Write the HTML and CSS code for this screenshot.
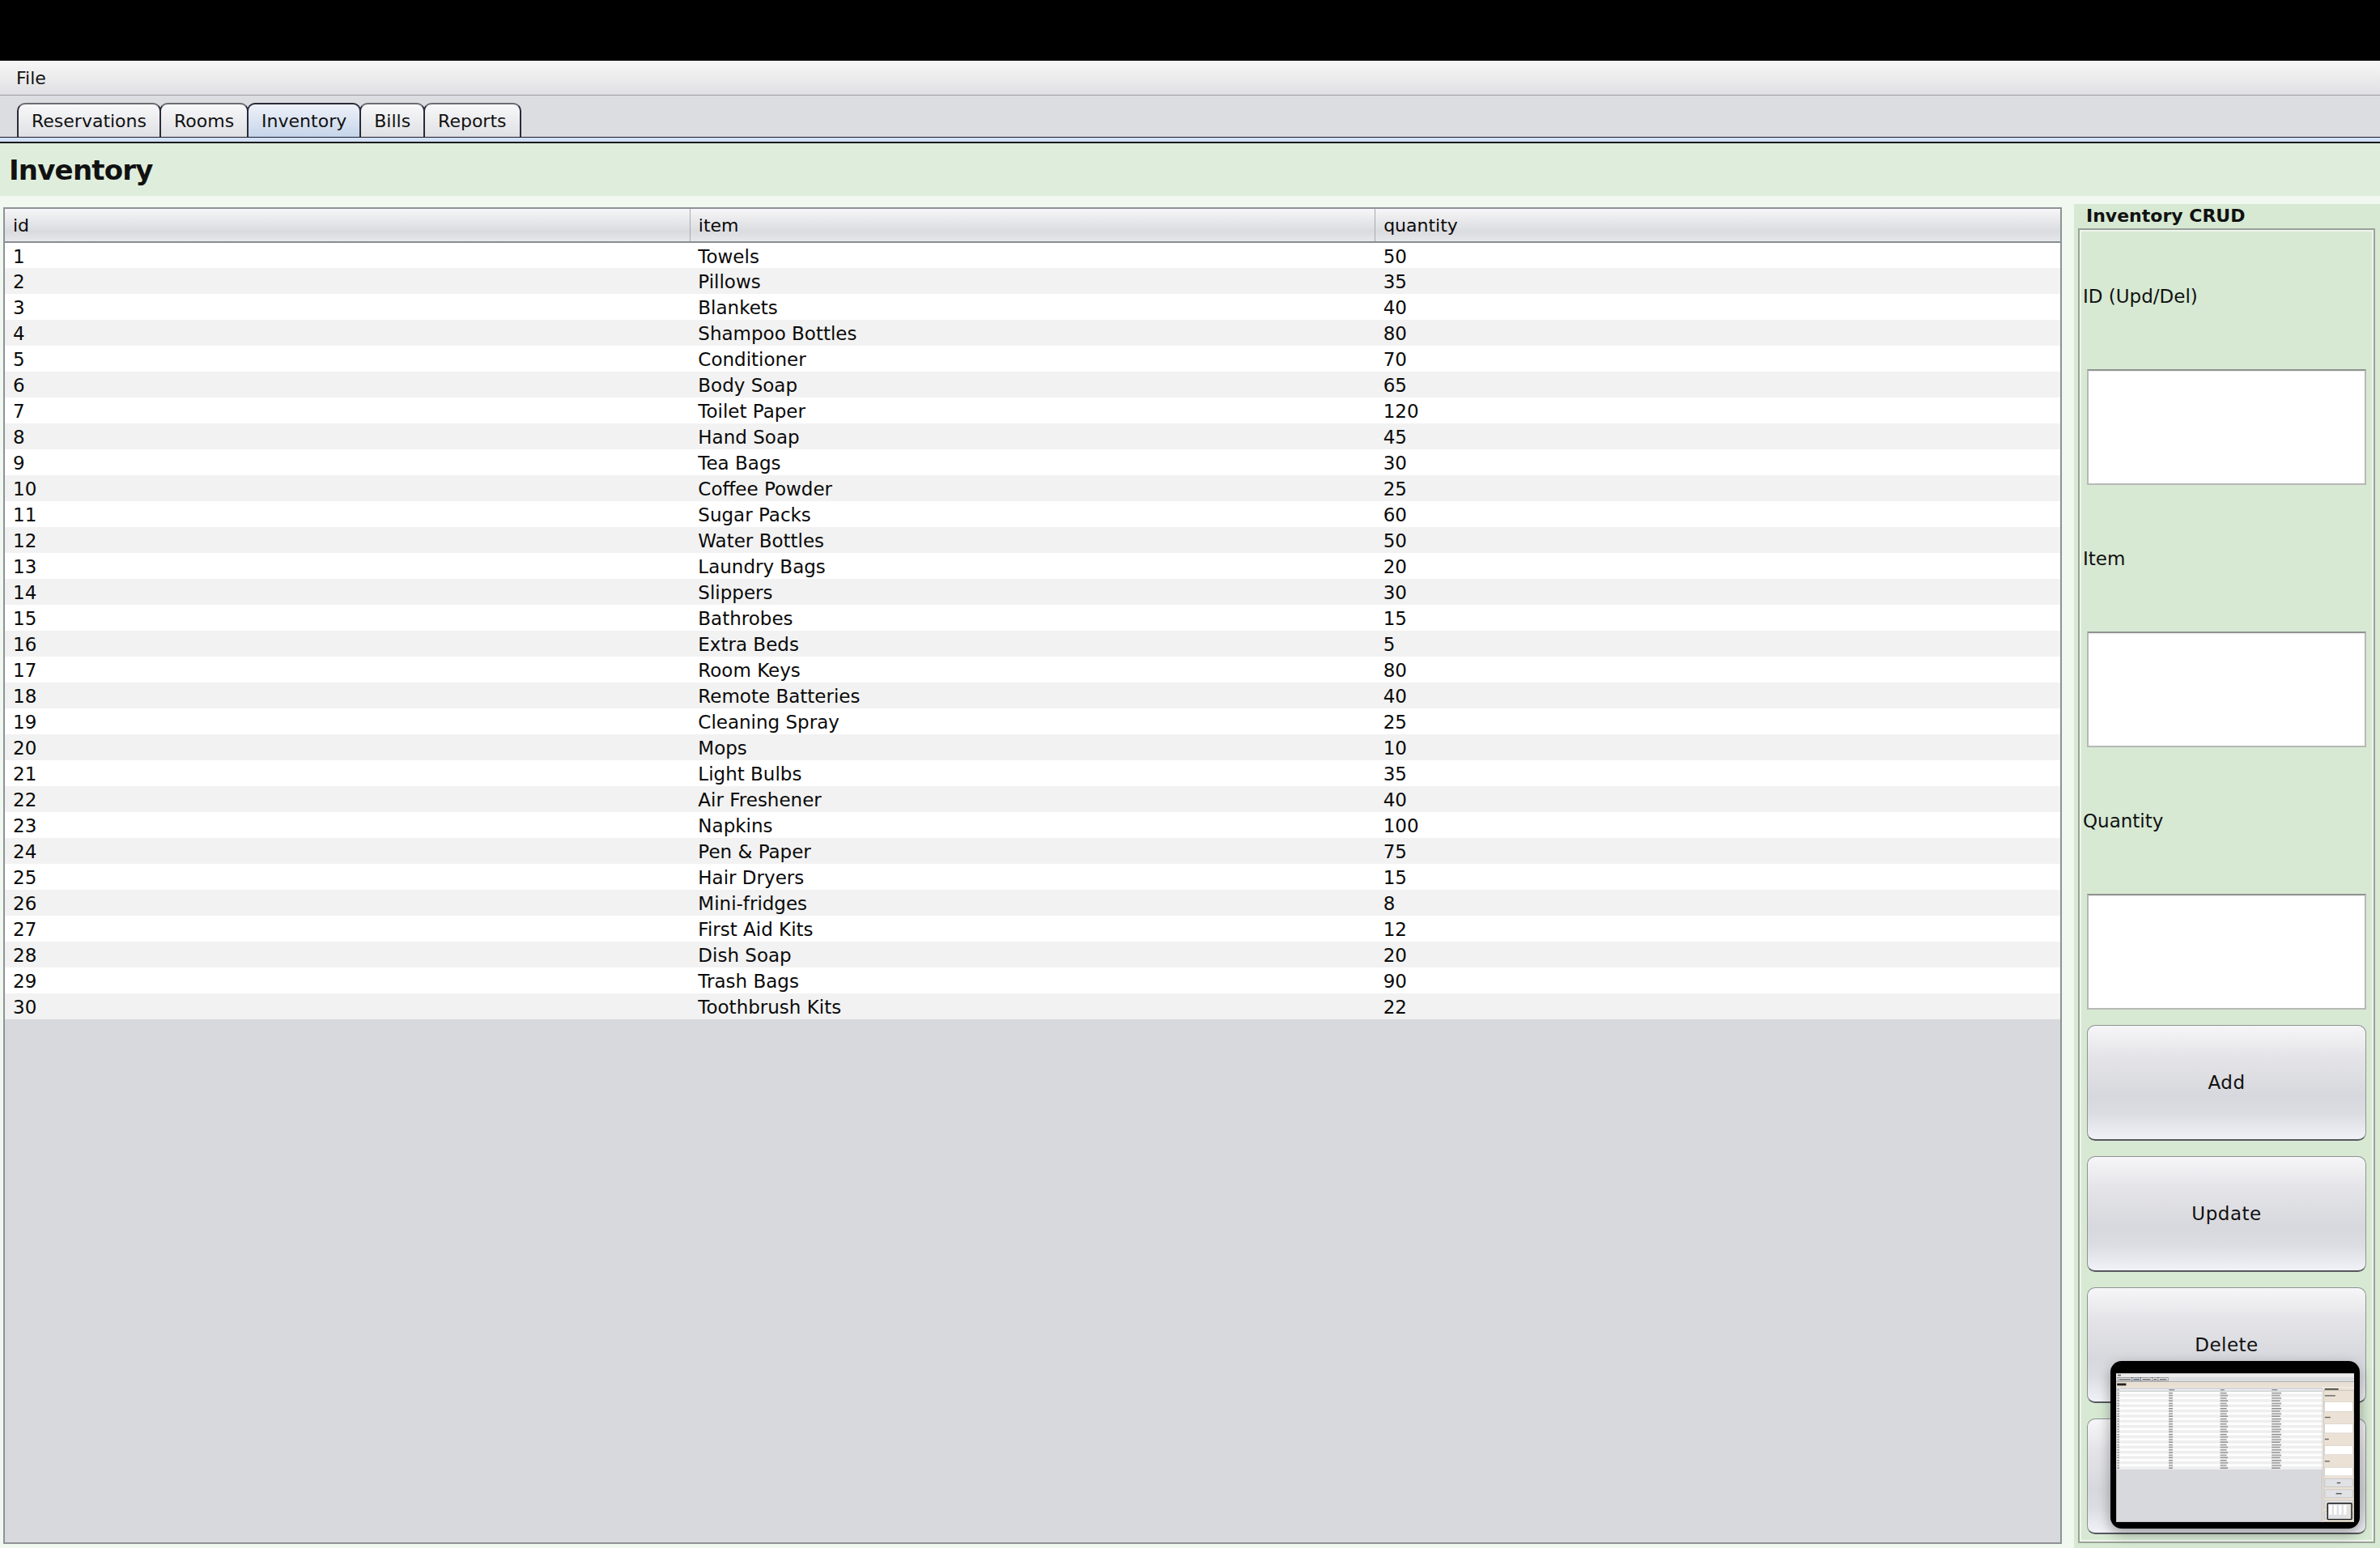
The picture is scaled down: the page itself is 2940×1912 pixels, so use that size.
FILE: index.html
```html
<!DOCTYPE html>
<html lang="en">
<head>
<meta charset="utf-8">
<title>Hotel Management - Inventory</title>
<link rel="stylesheet" href="styles.css">
</head>
<body>
<div class="app">
  <div class="titlebar"></div>
  <div class="menubar"><span class="menu-item">File</span></div>
  <div class="tabstrip">
    <div class="tab">Reservations</div>
    <div class="tab">Rooms</div>
    <div class="tab selected">Inventory</div>
    <div class="tab">Bills</div>
    <div class="tab">Reports</div>
  </div>
  <div class="tabband"></div>
  <div class="page">
    <div class="page-header"><h1>Inventory</h1></div>
    <div class="page-body">
      <div class="table-wrap">
        <table class="grid">
          <thead>
            <tr><th>id</th><th>item</th><th>quantity</th></tr>
          </thead>
          <tbody>
            <tr><td>1</td><td>Towels</td><td>50</td></tr>
            <tr><td>2</td><td>Pillows</td><td>35</td></tr>
            <tr><td>3</td><td>Blankets</td><td>40</td></tr>
            <tr><td>4</td><td>Shampoo Bottles</td><td>80</td></tr>
            <tr><td>5</td><td>Conditioner</td><td>70</td></tr>
            <tr><td>6</td><td>Body Soap</td><td>65</td></tr>
            <tr><td>7</td><td>Toilet Paper</td><td>120</td></tr>
            <tr><td>8</td><td>Hand Soap</td><td>45</td></tr>
            <tr><td>9</td><td>Tea Bags</td><td>30</td></tr>
            <tr><td>10</td><td>Coffee Powder</td><td>25</td></tr>
            <tr><td>11</td><td>Sugar Packs</td><td>60</td></tr>
            <tr><td>12</td><td>Water Bottles</td><td>50</td></tr>
            <tr><td>13</td><td>Laundry Bags</td><td>20</td></tr>
            <tr><td>14</td><td>Slippers</td><td>30</td></tr>
            <tr><td>15</td><td>Bathrobes</td><td>15</td></tr>
            <tr><td>16</td><td>Extra Beds</td><td>5</td></tr>
            <tr><td>17</td><td>Room Keys</td><td>80</td></tr>
            <tr><td>18</td><td>Remote Batteries</td><td>40</td></tr>
            <tr><td>19</td><td>Cleaning Spray</td><td>25</td></tr>
            <tr><td>20</td><td>Mops</td><td>10</td></tr>
            <tr><td>21</td><td>Light Bulbs</td><td>35</td></tr>
            <tr><td>22</td><td>Air Freshener</td><td>40</td></tr>
            <tr><td>23</td><td>Napkins</td><td>100</td></tr>
            <tr><td>24</td><td>Pen &amp; Paper</td><td>75</td></tr>
            <tr><td>25</td><td>Hair Dryers</td><td>15</td></tr>
            <tr><td>26</td><td>Mini-fridges</td><td>8</td></tr>
            <tr><td>27</td><td>First Aid Kits</td><td>12</td></tr>
            <tr><td>28</td><td>Dish Soap</td><td>20</td></tr>
            <tr><td>29</td><td>Trash Bags</td><td>90</td></tr>
            <tr><td>30</td><td>Toothbrush Kits</td><td>22</td></tr>
          </tbody>
        </table>
      </div>
      <div class="crud">
        <div class="crud-title">Inventory CRUD</div>
        <div class="crud-box">
          <div class="crud-label">ID (Upd/Del)</div>
          <div class="crud-field"></div>
          <div class="crud-label">Item</div>
          <div class="crud-field"></div>
          <div class="crud-label">Quantity</div>
          <div class="crud-field"></div>
          <div class="crud-btn">Add</div>
          <div class="crud-btn">Update</div>
          <div class="crud-btn">Delete</div>
          <div class="crud-btn">Refresh</div>
        </div>
      </div>
    </div>
  </div>

  <div class="thumb">
    <svg class="thumb-img" width="294" height="191" viewBox="0 0 2940 1912" preserveAspectRatio="none">
      <defs>
        <pattern id="rows" x="0" y="300" width="2940" height="64" patternUnits="userSpaceOnUse">
          <rect width="2940" height="32" fill="#ffffff"/>
          <rect y="32" width="2940" height="32" fill="#efefef"/>
          <g fill="#8a8a8a">
            <rect x="14" y="9" width="26" height="14"/>
            <rect x="650" y="9" width="50" height="14"/>
            <rect x="1286" y="9" width="80" height="14"/>
            <rect x="1921" y="9" width="120" height="14"/>
            <rect x="14" y="41" width="26" height="14"/>
            <rect x="650" y="41" width="50" height="14"/>
            <rect x="1286" y="41" width="95" height="14"/>
            <rect x="1921" y="41" width="105" height="14"/>
          </g>
        </pattern>
      </defs>
      <rect x="0" y="0" width="2940" height="1912" fill="#f4efe7"/>
      <rect x="0" y="0" width="2940" height="75" fill="#000"/>
      <rect x="0" y="75" width="2940" height="43" fill="#ececee"/>
      <rect x="20" y="88" width="40" height="16" fill="#666"/>
      <rect x="0" y="118" width="2940" height="52" fill="#dcdde0"/>
      <g stroke="#333" stroke-width="4" fill="#eeeef0">
        <rect x="21" y="127" width="176" height="42"/>
        <rect x="197" y="127" width="110" height="42" fill="#cbd8eb"/>
        <rect x="307" y="127" width="136" height="42"/>
        <rect x="443" y="127" width="77" height="42"/>
        <rect x="520" y="127" width="121" height="42"/>
      </g>
      <g fill="#666">
        <rect x="36" y="141" width="144" height="14"/>
        <rect x="214" y="141" width="76" height="14"/>
        <rect x="323" y="141" width="104" height="14"/>
        <rect x="459" y="141" width="45" height="14"/>
        <rect x="536" y="141" width="88" height="14"/>
      </g>
      <rect x="0" y="169" width="2940" height="8" fill="#cfdcef"/>
      <rect x="0" y="175" width="2940" height="3" fill="#222"/>
      <rect x="0" y="178" width="2940" height="64" fill="#e9dfd2"/>
      <rect x="12" y="196" width="112" height="28" fill="#222"/>
      <rect x="4" y="256" width="2543" height="1651" fill="#d8d9dd" stroke="#8e9297" stroke-width="4"/>
      <rect x="6" y="258" width="2539" height="40" fill="#e4e5e8"/>
      <g fill="#888">
        <rect x="16" y="270" width="20" height="14"/>
        <rect x="652" y="270" width="70" height="14"/>
        <rect x="1288" y="270" width="50" height="14"/>
        <rect x="1923" y="270" width="70" height="14"/>
      </g>
      <rect x="6" y="298" width="2539" height="3" fill="#8a8e94"/>
      <rect x="6" y="300" width="2539" height="960" fill="url(#rows)"/>
      <rect x="2562" y="252" width="378" height="1660" fill="#ebe2d5"/>
      <rect x="2577" y="260" width="170" height="16" fill="#333"/>
      <rect x="2567" y="282" width="367" height="1624" fill="none" stroke="#9a968f" stroke-width="4"/>
      <g fill="#666">
        <rect x="2578" y="342" width="130" height="14"/>
        <rect x="2578" y="610" width="70" height="14"/>
        <rect x="2578" y="880" width="50" height="14"/>
        <rect x="2578" y="1153" width="60" height="14"/>
      </g>
      <g fill="#fff" stroke="#b3b3b3" stroke-width="3">
        <rect x="2578" y="427" width="345" height="116"/>
        <rect x="2578" y="700" width="345" height="110"/>
        <rect x="2578" y="970" width="345" height="107"/>
        <rect x="2578" y="1237" width="345" height="103"/>
      </g>
      <g fill="#e1e2e6" stroke="#8a8c90" stroke-width="3">
        <rect x="2578" y="1377" width="345" height="100" rx="10"/>
        <rect x="2578" y="1510" width="345" height="100" rx="10"/>
        <rect x="2578" y="1643" width="345" height="100" rx="10"/>
        <rect x="2578" y="1776" width="345" height="100" rx="10"/>
      </g>
      <g fill="#555">
        <rect x="2728" y="1420" width="44" height="14"/>
        <rect x="2716" y="1553" width="70" height="14"/>
      </g>
      <rect x="2612" y="1679" width="298" height="199" rx="8" fill="#dfe0e3" stroke="#111" stroke-width="14"/>
      <g fill="#fff">
        <rect x="2630" y="1700" width="36" height="120"/>
        <rect x="2690" y="1700" width="36" height="120"/>
        <rect x="2750" y="1700" width="36" height="120"/>
        <rect x="2810" y="1700" width="36" height="120"/>
      </g>
      <rect x="2860" y="1700" width="30" height="160" fill="#ebe2d5"/>
    </svg>
  </div>
</div>
</body>
</html>
```

FILE: styles.css
```css
html, body {
  margin: 0;
  padding: 0;
}

body {
  width: 2940px;
  height: 1912px;
  overflow: hidden;
  background: #f0f8ef;
  font-family: "DejaVu Sans", "Noto Sans", sans-serif;
  color: #111;
}

.app {
  position: relative;
  display: flex;
  flex-direction: column;
  width: 2940px;
  height: 1912px;
}

.titlebar {
  flex: none;
  height: 75px;
  background: #000;
}

.menubar {
  flex: none;
  height: 42px;
  border-bottom: 1px solid #9d9ea2;
  background: linear-gradient(#f7f7f7, #e0e0e2);
  display: flex;
  align-items: center;
  padding-left: 20px;
  font-size: 22px;
}

.tabstrip {
  flex: none;
  box-sizing: border-box;
  height: 52px;
  padding: 9px 0 0 21px;
  background: #dcdde0;
  border-bottom: 1px solid #1e1e2c;
  display: flex;
  align-items: flex-end;
}

.tab {
  box-sizing: border-box;
  height: 42px;
  padding: 0 16px;
  border: 2px solid #2a2a38;
  border-top-color: #6a6c74;
  border-bottom: none;
  border-radius: 10px 10px 0 0;
  background: linear-gradient(#f8f8fa, #dfe0e4);
  font-size: 22px;
  display: flex;
  align-items: center;
  margin-right: -2px;
}

.tab.selected {
  background: linear-gradient(#eef2f9, #c6d5ea);
  border-top-color: #2a2a38;
}

.tabband {
  flex: none;
  height: 5px;
  background: #d2e0f4;
  border-bottom: 2px solid #1b1b1f;
}

.page {
  flex: 1;
  display: flex;
  flex-direction: column;
  min-height: 0;
}

.page-header {
  flex: none;
  height: 65px;
  background: #dfeedc;
  display: flex;
  align-items: center;
  padding-left: 11px;
}

.page-header h1 {
  margin: 0;
  font-size: 34px;
  font-weight: bold;
  letter-spacing: -0.8px;
}

.page-body {
  flex: 1;
  display: flex;
  align-items: flex-start;
  padding-left: 4px;
  background: #f0f8ef;
  min-height: 0;
}

.table-wrap {
  flex: none;
  box-sizing: border-box;
  width: 2543px;
  height: 1651px;
  margin-top: 14px;
  border: 2px solid #8e9298;
  background: #d8d9dd;
  overflow: hidden;
}

.grid {
  width: 100%;
  border-collapse: collapse;
  table-layout: fixed;
  font-size: 23px;
  color: #0a0a0a;
}

.grid th {
  height: 40px;
  padding: 0 0 0 10px;
  text-align: left;
  font-weight: normal;
  font-size: 22px;
  background: linear-gradient(#f6f6f8, #e4e5e8 45%, #dadbdf 70%, #e6e7ea);
  border-bottom: 2px solid #898d93;
}

.grid th + th {
  border-left: 1px solid #a7aab0;
}

.grid td {
  box-sizing: border-box;
  height: 32px;
  padding: 2px 0 0 10px;
  line-height: 28px;
  white-space: nowrap;
  background: #ffffff;
}

.grid tbody tr:nth-child(even) td {
  background: #f2f2f2;
}

.crud {
  flex: 1;
  align-self: stretch;
  margin: 10px 0 0 15px;
  padding: 0 6px 0 5px;
  background: #d7e9d3;
  display: flex;
  flex-direction: column;
}

.crud-title {
  height: 30px;
  line-height: 30px;
  padding-left: 10px;
  font-size: 22px;
  font-weight: bold;
}

.crud-box {
  border: 2px solid #9ba199;
  box-shadow: inset 0 0 0 2px #eef5ec;
  padding: 10px 2px 9px 4px;
  display: grid;
  grid-template-rows: repeat(10, 143px);
  row-gap: 19px;
}

.crud-label {
  display: flex;
  align-items: center;
  font-size: 23px;
}

.crud-field {
  margin: 0 7px 0 5px;
  background: #fff;
  border: 2px solid #b7b9b7;
  border-top-color: #8f918f;
  box-shadow: inset 0 1px 2px rgba(0, 0, 0, 0.08);
}

.crud-btn {
  margin: 0 7px 0 5px;
  border: 1px solid #8f9195;
  border-bottom: 2px solid #55585d;
  border-radius: 10px;
  background: linear-gradient(#f6f6f8, #e4e4e8 28%, #d7d8dd 62%, #dcdde2 78%, #f1f2f7);
  display: flex;
  align-items: center;
  justify-content: center;
  font-size: 23px;
  letter-spacing: 0.5px;
}

.thumb {
  position: absolute;
  left: 2607px;
  top: 1681px;
  width: 308px;
  height: 207px;
  box-sizing: border-box;
  padding: 8px 7px;
  background: #000;
  border-radius: 14px;
  box-shadow: 0 6px 16px rgba(0, 0, 0, 0.35);
}

.thumb-img {
  display: block;
}
```
